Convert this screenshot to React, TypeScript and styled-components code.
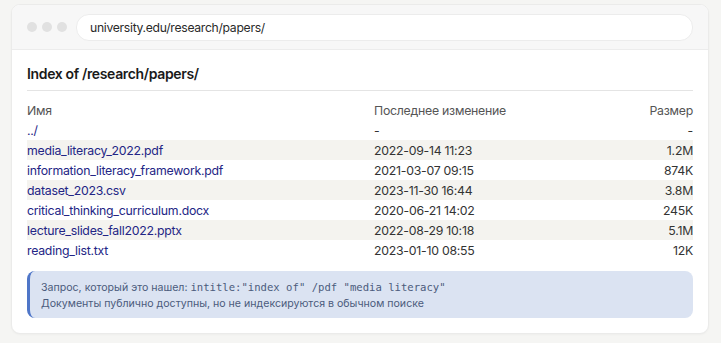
import React from "react";
import styled, { createGlobalStyle } from "styled-components";

const Global = createGlobalStyle`
  html, body { margin: 0; padding: 0; background: #f5f5f3; }
  body { font-family: Inter, "Noto Sans", sans-serif; -webkit-font-smoothing: antialiased; }
`;

const Page = styled.div`
  padding: 4px 12px 10px 11px;
`;

const Window = styled.div`
  background: #ffffff;
  border: 1px solid #ebebea;
  border-radius: 9px;
  overflow: hidden;
  box-shadow: 0 1px 2px rgba(0,0,0,0.03);
`;

const TitleBar = styled.div`
  display: flex;
  align-items: center;
  height: 44px;
  padding: 0 15px 0 15px;
  background: #f7f7f7;
  border-bottom: 1px solid #ececec;
  gap: 5px;
`;

const Dot = styled.span`
  width: 10px;
  height: 10px;
  border-radius: 50%;
  background: #e1e1e1;
  flex: none;
`;

const UrlBar = styled.div`
  flex: 1;
  margin-left: 4px;
  height: 25px;
  border-radius: 13px;
  background: #ffffff;
  border: 1px solid #ececec;
  display: flex;
  align-items: center;
  padding-left: 13px;
  font-size: 12.2px;
  letter-spacing: -0.3px;
  color: #2a2a2a;
`;

const Content = styled.div`
  padding: 12px 15px 15px 15px;
`;

const Heading = styled.h1`
  margin: 0;
  font-size: 14px;
  font-weight: 600;
  letter-spacing: -0.35px;
  color: #1a1a1a;
  line-height: 24px;
  padding-bottom: 4px;
  border-bottom: 1px solid #e4e4e4;
`;

const Table = styled.div`
  margin-top: 9px;
  display: flex;
  flex-direction: column;
`;

const Row = styled.div<{ $striped?: boolean }>`
  display: grid;
  grid-template-columns: 347px 1fr 100px;
  height: 20px;
  align-items: center;
  font-size: 12.3px;
  letter-spacing: -0.25px;
  background: ${(p) => (p.$striped ? "#f4f3ef" : "transparent")};
`;

const HeadCell = styled.span<{ $right?: boolean }>`
  color: #555555;
  text-align: ${(p) => (p.$right ? "right" : "left")};
`;

const NameLink = styled.a`
  color: #232585;
  text-decoration: none;
`;

const Cell = styled.span<{ $right?: boolean }>`
  color: #333333;
  text-align: ${(p) => (p.$right ? "right" : "left")};
`;

const Note = styled.div`
  margin-top: 11px;
  background: #dbe3f2;
  border-left: 3px solid #4f76c8;
  border-radius: 8px;
  padding: 8px 12px 6px 11px;
  font-size: 10.6px;
  line-height: 16px;
  color: #4b5b7c;
`;

const Code = styled.code`
  font-family: "DejaVu Sans Mono", "Liberation Mono", monospace;
  font-size: 10.6px;
`;

const files = [
  { name: "../", date: "-", size: "-" },
  { name: "media_literacy_2022.pdf", date: "2022-09-14 11:23", size: "1.2M" },
  { name: "information_literacy_framework.pdf", date: "2021-03-07 09:15", size: "874K" },
  { name: "dataset_2023.csv", date: "2023-11-30 16:44", size: "3.8M" },
  { name: "critical_thinking_curriculum.docx", date: "2020-06-21 14:02", size: "245K" },
  { name: "lecture_slides_fall2022.pptx", date: "2022-08-29 10:18", size: "5.1M" },
  { name: "reading_list.txt", date: "2023-01-10 08:55", size: "12K" },
];

export default function App() {
  return (
    <>
      <Global />
      <Page>
        <Window>
          <TitleBar>
            <Dot />
            <Dot />
            <Dot />
            <UrlBar>university.edu/research/papers/</UrlBar>
          </TitleBar>
          <Content>
            <Heading>Index of /research/papers/</Heading>
            <Table>
              <Row>
                <HeadCell>Имя</HeadCell>
                <HeadCell>Последнее изменение</HeadCell>
                <HeadCell $right>Размер</HeadCell>
              </Row>
              {files.map((f, i) => (
                <Row key={f.name} $striped={i % 2 === 1}>
                  <NameLink href="#">{f.name}</NameLink>
                  <Cell>{f.date}</Cell>
                  <Cell $right>{f.size}</Cell>
                </Row>
              ))}
            </Table>
            <Note>
              <div>
                Запрос, который это нашел: <Code>intitle:"index of" /pdf "media literacy"</Code>
              </div>
              <div>Документы публично доступны, но не индексируются в обычном поиске</div>
            </Note>
          </Content>
        </Window>
      </Page>
    </>
  );
}
